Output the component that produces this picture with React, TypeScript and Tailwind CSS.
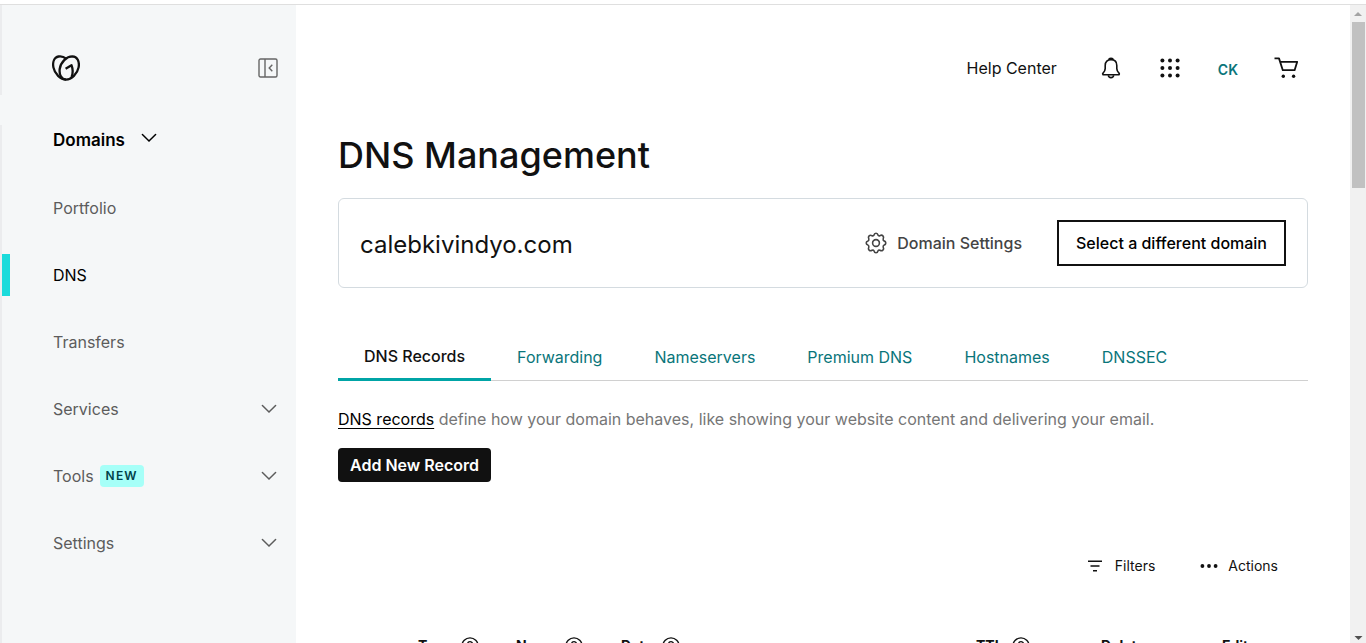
import React from "react";

type IconProps = { className?: string };

function Logo() {
  return (
    <svg viewBox="0 0 28 26" className="h-[26px] w-7" fill="none" stroke="#111" strokeWidth="2.3" strokeLinejoin="round">
      <path d="M14 24.6C8.5 24.4 2.6 18.8 1.4 12.4C.4 6.8 2.3 2.3 6.5 1.5C9.2 1 12 1.9 14 3.7" />
      <path d="M14 24.6C9.4 24.4 7 19.5 7.7 14C8.7 7.2 14.6 1.4 20.3 1.4C25.4 1.6 27.7 6.4 26.6 12.4C25.4 18.8 19.5 24.4 14 24.6Z" />
      <path d="M13.6 13.8L19.5 10.2C21 14.2 21.1 18.4 19.6 22" />
    </svg>
  );
}

function Chevron({ className }: IconProps) {
  return (
    <svg viewBox="0 0 16 10" className={className} fill="none" stroke="currentColor" strokeWidth="1.5" strokeLinecap="round">
      <path d="M1.4 1.5L8 8L14.6 1.5" />
    </svg>
  );
}

function CollapseIcon() {
  return (
    <svg viewBox="0 0 20 20" className="size-5" fill="none" stroke="#666" strokeWidth="1.4">
      <rect x="1" y="1" width="18" height="18" rx="1.5" />
      <path d="M7 1V19M14.3 6.8L11.2 10L14.3 13.2" />
    </svg>
  );
}

function BellIcon() {
  return (
    <svg viewBox="0 0 20 24" className="h-6 w-5" fill="none" stroke="#111" strokeWidth="1.6" strokeLinejoin="round">
      <path d="M2 18.8C1.5 18.3 1.6 17.5 2.2 16.9C3.5 15.6 4.1 14.4 4.2 12.6V9.4C4.2 5.8 6.6 3.6 10 3.6S15.8 5.8 15.8 9.4V12.6C15.9 14.4 16.5 15.6 17.8 16.9C18.4 17.5 18.5 18.3 18 18.8Z" />
      <path d="M8 3.8C8 1.7 12 1.7 12 3.8M7.4 19.2C7.6 22.4 12.4 22.4 12.6 19.2" />
    </svg>
  );
}

function GridIcon() {
  return (
    <svg viewBox="0 0 20 20" className="size-5" fill="#111">
      {[2.4, 10, 17.6].map((y) => [2.4, 10, 17.6].map((x) => <circle key={`${x}-${y}`} cx={x} cy={y} r="2" />))}
    </svg>
  );
}

function CartIcon() {
  return (
    <svg viewBox="0 0 24 22" className="h-[22px] w-6" fill="none" stroke="#111" strokeWidth="1.8" strokeLinejoin="round">
      <path d="M.5 1.4H5L8.8 13.2H20.6L23.2 4.8H6.2" />
      <circle cx="9.3" cy="19.3" r="1.7" fill="#111" stroke="none" />
      <circle cx="19.6" cy="19.3" r="1.7" fill="#111" stroke="none" />
    </svg>
  );
}

function GearIcon() {
  return (
    <svg viewBox="0 0 22 22" className="size-[22px]" fill="none" stroke="#444" strokeWidth="1.6" strokeLinejoin="round">
      <circle cx="11" cy="11" r="3.4" />
      <path d="M9 3.2Q9.3 1.2 11 1.2T13 3.2Q13.6 4.3 15 3.7Q16.7 2.6 17.9 3.9T18.2 6.8Q17.8 8.4 19 8.9Q20.8 9.3 20.8 11T19 13.1Q17.8 13.7 18.2 15.1Q19.2 16.9 17.9 18.1T15 18.3Q13.6 17.8 13 18.9Q12.6 20.8 11 20.8T9 18.9Q8.4 17.8 7 18.3Q5.3 19.3 4.1 18.1T3.8 15.1Q4.2 13.7 3 13.1Q1.2 12.6 1.2 11T3 8.9Q4.2 8.4 3.8 6.8Q2.9 5.1 4.1 3.9T7 3.7Q8.4 4.3 9 3.2Z" />
    </svg>
  );
}

function FilterIcon() {
  return (
    <svg viewBox="0 0 16 12" className="h-3 w-4" fill="none" stroke="#111" strokeWidth="1.5">
      <path d="M1 1.2H15M3.5 6H12.5M6 10.8H10" />
    </svg>
  );
}

function DotsIcon() {
  return (
    <svg viewBox="0 0 18 4" className="h-1 w-[18px]" fill="#111">
      <circle cx="2.4" cy="2" r="1.9" />
      <circle cx="9" cy="2" r="1.9" />
      <circle cx="15.6" cy="2" r="1.9" />
    </svg>
  );
}

function HelpIcon() {
  return (
    <svg viewBox="0 0 18 18" className="size-[18px]" fill="none" stroke="#111" strokeWidth="1.4">
      <circle cx="9" cy="9" r="8.1" />
      <path d="M6.6 7C6.6 3.9 11.4 3.9 11.4 6.9C11.4 8.6 9 8.8 9 10.6" />
      <circle cx="9" cy="13" r=".9" fill="#111" stroke="none" />
    </svg>
  );
}

type NavItem = { label: string; active?: boolean; expandable?: boolean; badge?: string };

const navItems: NavItem[] = [
  { label: "Portfolio" },
  { label: "DNS", active: true },
  { label: "Transfers" },
  { label: "Services", expandable: true },
  { label: "Tools", expandable: true, badge: "NEW" },
  { label: "Settings", expandable: true },
];

const tabs = ["DNS Records", "Forwarding", "Nameservers", "Premium DNS", "Hostnames", "DNSSEC"];

function Sidebar() {
  return (
    <aside className="flex w-[296px] shrink-0 bg-[#f5f7f8]">
      <div className="flex w-0.5 flex-col bg-[#ebecee]">
        <div className="mt-[90px] h-[30px] bg-[#f5f7f8]" />
      </div>
      <div className="flex-1">
        <div className="flex h-[125px] items-center justify-between pr-[18px] pl-[50px]">
          <a href="#home" aria-label="Home"><Logo /></a>
          <button aria-label="Collapse sidebar"><CollapseIcon /></button>
        </div>
        <button className="flex h-6 items-start gap-4 pl-[51px] text-[17px] leading-5 font-semibold text-black">
          Domains
          <Chevron className="mt-[3px] h-2.5 w-4" />
        </button>
        <nav className="mt-5">
          {navItems.map((item) => {
            const content = (
              <>
                {item.active ? <span className="h-[42px] w-2 bg-[#1bdbdb]" /> : <span className="w-2" />}
                <span className="pl-[43px]">{item.label}</span>
                {item.badge && (
                  <span className="ml-1.5 rounded bg-[#a6fff8] px-1.5 text-xs leading-[22px] font-semibold tracking-widest text-[#004249]">
                    {item.badge}
                  </span>
                )}
                {item.expandable && <Chevron className="ml-auto h-2.5 w-4" />}
              </>
            );
            const color = item.active ? "text-black" : "text-[#5c5c5c]";
            return item.expandable ? (
              <button key={item.label} className={`flex h-[67px] w-full items-center pr-[19px] ${color}`}>{content}</button>
            ) : (
              <a key={item.label} href={`#${item.label}`} className={`flex h-[67px] w-full items-center ${color}`}>{content}</a>
            );
          })}
        </nav>
      </div>
    </aside>
  );
}

function Heading({ label, help }: { label: string; help?: boolean }) {
  return (
    <th className="p-0 text-left">
      <span className="flex items-center gap-[9px] text-sm font-bold">
        {label}
        {help && <HelpIcon />}
      </span>
    </th>
  );
}

function ScrollTrack() {
  return (
    <div className="flex w-4 shrink-0 flex-col items-center bg-[#f1f1f1]" aria-hidden="true">
      <svg viewBox="0 0 16 17" className="h-[17px] w-4 shrink-0" fill="#a3a3a3"><path d="M4 11L8 7L12 11Z" /></svg>
      <div className="h-[26%] w-[13px] bg-[#c1c1c1]" />
      <svg viewBox="0 0 16 17" className="mt-auto h-[17px] w-4 shrink-0" fill="#505050"><path d="M4.5 10L8.5 14L12.5 10Z" /></svg>
    </div>
  );
}

export default function App() {
  return (
    <div className="flex h-screen flex-col overflow-hidden bg-white font-['Inter',sans-serif] text-base text-[#111]">
      <div className="h-[5px] shrink-0 border-b border-[#dfdfdf]" />
      <div className="flex min-h-0 flex-1">
        <Sidebar />
        <main className="min-w-0 flex-1 overflow-hidden px-[42px]">
          <header className="flex h-[126px] items-center justify-end pr-2.5">
            <a href="#help" className="mr-11">Help Center</a>
            <button aria-label="Notifications" className="mr-[39px]"><BellIcon /></button>
            <button aria-label="Apps" className="mr-[38px]"><GridIcon /></button>
            <button className="mr-9 pt-1 text-sm font-semibold text-[#09757a]">CK</button>
            <a href="#cart" aria-label="Cart"><CartIcon /></a>
          </header>
          <h1 className="text-4xl leading-[48px] font-medium">DNS Management</h1>
          <section className="mt-[19px] flex h-[90px] items-center rounded-md border border-[#d4dbe0] px-[21px]">
            <h2 className="pt-1 text-2xl">calebkivindyo.com</h2>
            <button className="mr-[35px] ml-auto flex items-center gap-2.5 font-medium text-[#444]">
              <GearIcon />
              Domain Settings
            </button>
            <button className="h-[46px] border-2 border-[#111] px-[17px] font-medium text-black">Select a different domain</button>
          </section>
          <div role="tablist" className="mt-[45px] flex h-12 border-b border-[#d0d0d0]">
            {tabs.map((tab, i) =>
              i === 0 ? (
                <button key={tab} role="tab" aria-selected="true" className="-mb-px border-b-3 border-[#00a4a6] px-[26px] font-medium">{tab}</button>
              ) : (
                <button key={tab} role="tab" aria-selected="false" className="px-[26px] text-[#09757a]">{tab}</button>
              ),
            )}
          </div>
          <p className="mt-[26px] leading-6 text-[#767676]">
            <a href="#records" className="text-black underline underline-offset-3">DNS records</a> define how your domain behaves, like showing your website content and delivering your email.
          </p>
          <button className="mt-[17px] h-[34px] rounded bg-[#111] px-3 font-semibold text-white">Add New Record</button>
          <div className="mt-[74px] flex h-5 justify-end gap-[45px] pr-[30px] text-sm">
            <button className="flex items-center gap-3"><FilterIcon />Filters</button>
            <button className="flex items-center gap-2.5"><DotsIcon />Actions</button>
          </div>
          <table className="mt-[60px] w-full table-fixed">
            <colgroup>
              <col className="w-20" />
              <col className="w-[98px]" />
              <col className="w-[105px]" />
              <col />
              <col className="w-[125px]" />
              <col className="w-[121px]" />
              <col className="w-[86px]" />
            </colgroup>
            <thead>
              <tr>
                <td />
                <Heading label="Type" help />
                <Heading label="Name" help />
                <Heading label="Data" help />
                <Heading label="TTL" help />
                <Heading label="Delete" />
                <Heading label="Edit" />
              </tr>
            </thead>
          </table>
        </main>
        <ScrollTrack />
      </div>
    </div>
  );
}
